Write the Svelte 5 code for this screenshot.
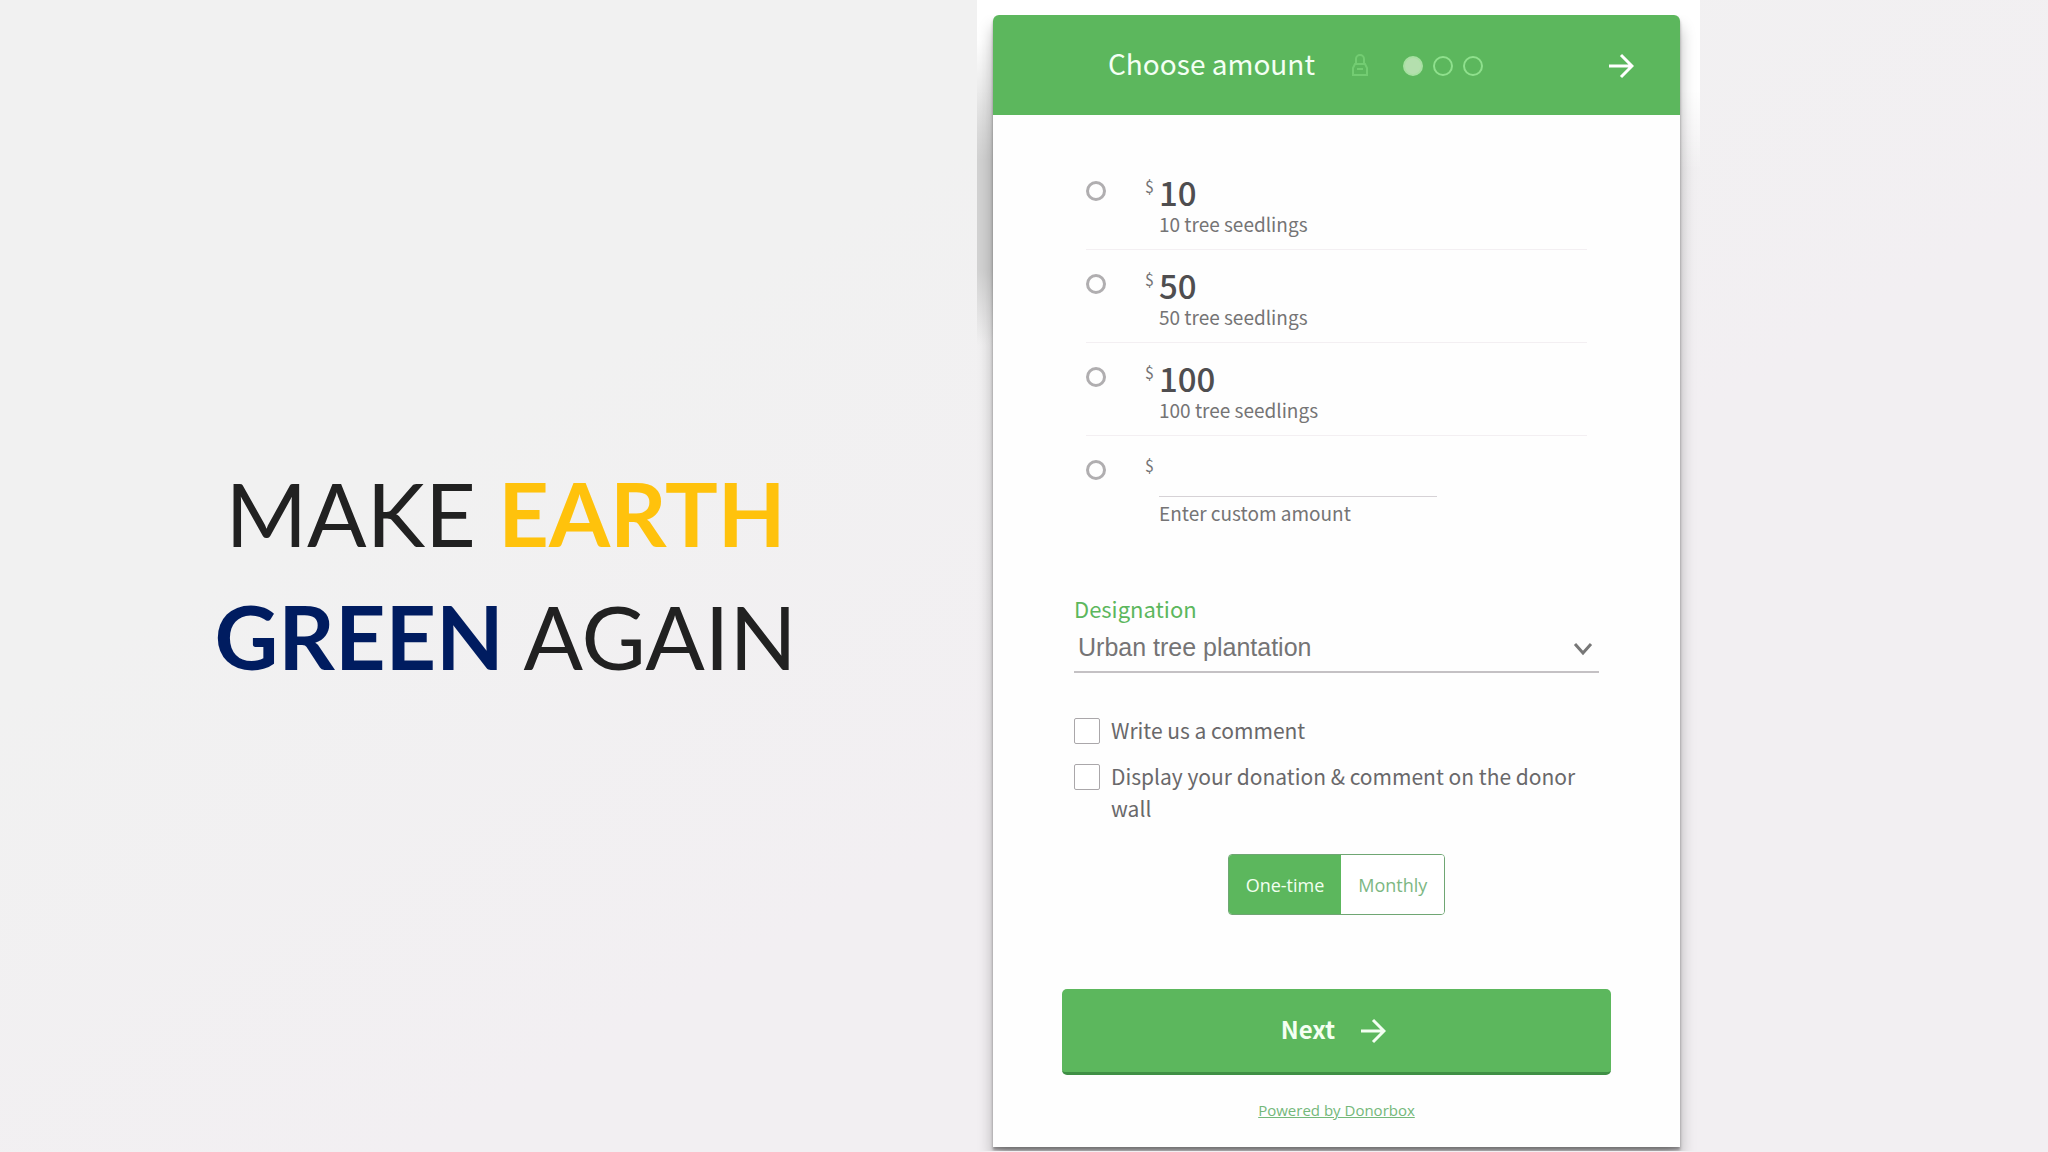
<script>
  const amounts = [10, 50, 100];
  let amount = $state('');
  let frequency = $state('One-time');
  let designation = $state('Urban tree plantation');
</script>

{#snippet arrow()}
  <svg class="arrow" viewBox="0 0 26 26" aria-hidden="true">
    <path d="M1 13H24M13 2L24 13L13 24" />
  </svg>
{/snippet}

<main>
  <section class="pitch">
    <h1>MAKE <b class="earth">EARTH</b><br /><b class="green">GREEN</b> AGAIN</h1>
  </section>

  <section class="stage">
    <form class="card" onsubmit={(e) => e.preventDefault()}>
      <header>
        <h2>Choose amount</h2>
        <svg class="lock" viewBox="0 0 20 24" aria-hidden="true">
          <path d="M6 11V6a4 4 0 0 1 8 0v5M5 11h10l2 4v7H3v-7zM7 16h6" />
        </svg>
        <ol class="steps" aria-label="Steps">
          <li class="current"></li>
          <li></li>
          <li></li>
        </ol>
        <button class="forward" type="button" aria-label="Next step">{@render arrow()}</button>
      </header>

      <div class="body">
        <div class="amounts">
          {#each amounts as value}
            <label class="option">
              <input type="radio" name="amount" value={String(value)} bind:group={amount} />
              <span class="currency">$</span>
              <span class="detail">
                <span class="value">{value}</span>
                <span class="note">{value} tree seedlings</span>
              </span>
            </label>
          {/each}
          <div class="option custom">
            <input type="radio" name="amount" value="custom" bind:group={amount} aria-label="Custom amount" />
            <span class="currency">$</span>
            <span class="detail">
              <input class="entry" id="custom-amount" type="text" inputmode="decimal" />
              <label class="note" for="custom-amount">Enter custom amount</label>
            </span>
          </div>
        </div>

        <div class="designation">
          <label for="designation">Designation</label>
          <div class="picker">
            <select id="designation" bind:value={designation}>
              <option>Urban tree plantation</option>
            </select>
            <svg class="chevron" viewBox="0 0 20 14" aria-hidden="true"><path d="M2 2L10 11L18 2" /></svg>
          </div>
        </div>

        <div class="checks">
          <label><input type="checkbox" /><span>Write us a comment</span></label>
          <label><input type="checkbox" /><span>Display your donation &amp; comment on the donor wall</span></label>
        </div>

        <div class="toggle">
          {#each ['One-time', 'Monthly'] as name}
            <button
              type="button"
              class:active={frequency === name}
              aria-pressed={frequency === name}
              onclick={() => (frequency = name)}>{name}</button>
          {/each}
        </div>

        <button class="next" type="submit"><span>Next</span> {@render arrow()}</button>
        <a class="powered" href="#donorbox">Powered by Donorbox</a>
      </div>
    </form>
  </section>
</main>

<style>
  :global(body) {
    margin: 0;
  }

  main {
    --green: #5cb75d;
    --ui: 'Noto Sans CJK SC', 'Noto Sans', sans-serif;
    display: grid;
    grid-template-columns: 977fr 723fr 348fr;
    min-height: 100vh;
    background: linear-gradient(150deg, #f1f1f1 30%, #f2eff2 60%);
    font-family: var(--ui);
    overflow: hidden;
  }

  h1,
  h2,
  ol {
    margin: 0;
    padding: 0;
    font-weight: 400;
  }

  button,
  select,
  input {
    margin: 0;
    font: inherit;
    border: 0;
    box-sizing: border-box;
  }

  button {
    cursor: pointer;
  }

  .pitch {
    display: grid;
    place-items: center;
    padding: 0 0 2px 34px;
  }

  h1 {
    font: 400 88px/123px Lato, sans-serif;
    color: #212121;
    text-align: center;
    white-space: nowrap;
  }

  .earth {
    color: #ffc20c;
  }

  .green {
    color: #001c60;
  }

  .stage {
    padding: 15px 20px 4px 16px;
    background:
      linear-gradient(transparent 40px, #d2d2d2 160px, #d2d2d2 270px, transparent 345px) 0 0 / 16px 100% no-repeat,
      linear-gradient(#fff, #fff 90px, transparent 170px);
  }

  .card {
    background: #fefefe;
    border-radius: 6px 6px 0 0;
    box-shadow: 0 12px 16px rgba(0, 0, 0, 0.28), 0 3px 3px rgba(0, 0, 0, 0.35);
    clip-path: inset(0 -20px -4px -16px);
  }

  header {
    display: flex;
    align-items: center;
    height: 100px;
    padding: 0 46px 0 115px;
    background: var(--green);
    color: #f4fff4;
    border-radius: 6px 6px 0 0;
    box-sizing: border-box;
  }

  h2 {
    padding-bottom: 4px;
    font-size: 28px;
    line-height: 40px;
  }

  .lock {
    width: 20px;
    height: 24px;
    margin-left: 35px;
    fill: none;
    stroke: #73cc72;
    stroke-width: 2;
  }

  .steps {
    display: flex;
    align-items: center;
    gap: 10px;
    margin-left: 33px;
    padding-top: 2px;
    list-style: none;
  }

  .steps li {
    width: 20px;
    height: 20px;
    border: 2px solid #8fe08d;
    border-radius: 50%;
    box-sizing: border-box;
  }

  .steps .current {
    background: #b4dfae;
    border-color: #a8e0a2;
  }

  .forward {
    margin-left: auto;
    padding: 2px 0 0;
    background: none;
    color: #fff;
    line-height: 0;
  }

  .arrow {
    width: 26px;
    height: 26px;
    fill: none;
    stroke: currentColor;
    stroke-width: 3;
  }

  .body {
    display: flex;
    flex-direction: column;
    padding: 42px 69px 25px;
  }

  .amounts {
    margin: 0 24px;
  }

  .option {
    display: flex;
    align-items: flex-start;
    height: 93px;
    padding-top: 16px;
    border-bottom: 1px solid #f3eff2;
    box-sizing: border-box;
    color: #757475;
  }

  input[type='radio'] {
    appearance: none;
    width: 20px;
    height: 20px;
    margin: 8px 39px 0 0;
    border: 3px solid #b0aeb0;
    border-radius: 50%;
  }

  .currency {
    width: 14px;
    font-size: 16px;
    line-height: 26px;
  }

  .detail {
    display: flex;
    flex-direction: column;
  }

  .value {
    font-size: 33px;
    font-weight: 500;
    line-height: 38px;
    color: #4f4e50;
  }

  .note {
    font-size: 19px;
    line-height: 26px;
  }

  .custom {
    height: 106px;
    border: 0;
  }

  .entry {
    width: 278px;
    height: 45px;
    border-bottom: 1px solid #d6d2d6;
    background: none;
    margin-bottom: 3px;
    outline: 0;
  }

  .designation {
    margin: 51px 12px 0;
    color: var(--green);
    font-size: 22px;
    line-height: 30px;
  }

  .designation label {
    display: block;
  }

  .picker {
    display: grid;
    align-items: center;
    border-bottom: 2px solid #c4c1c4;
  }

  .picker > * {
    grid-area: 1 / 1;
  }

  select {
    appearance: none;
    width: 100%;
    height: 48px;
    padding: 0 4px;
    background: none;
    font: 25px/30px 'Liberation Sans', sans-serif;
    color: #757475;
  }

  .chevron {
    justify-self: end;
    width: 20px;
    height: 14px;
    margin: 4px 6px 0 0;
    fill: none;
    stroke: #777;
    stroke-width: 3;
    pointer-events: none;
  }

  .checks {
    display: grid;
    gap: 14px;
    margin: 41px 12px 0;
    font-size: 21px;
    line-height: 32px;
    color: #69686a;
  }

  .checks label {
    display: flex;
    gap: 11px;
  }

  input[type='checkbox'] {
    appearance: none;
    flex: none;
    width: 26px;
    height: 26px;
    margin-top: 4px;
    border: 1px solid #aaa7aa;
    border-radius: 2px;
    background: #fff;
  }

  .toggle {
    display: flex;
    align-self: center;
    margin-top: 30px;
    border: 1px solid #6fa673;
    border-radius: 4px;
    overflow: hidden;
  }

  .toggle button {
    height: 59px;
    padding: 0 17px;
    background: #fff;
    color: #7cb783;
    font: 18px/24px 'Open Sans', sans-serif;
  }

  .toggle .active {
    background: var(--green);
    color: #f2fff0;
  }

  .next {
    display: flex;
    align-items: center;
    justify-content: center;
    gap: 25px;
    height: 86px;
    margin-top: 74px;
    padding-right: 12px;
    border-bottom: 3px solid #3f8f45;
    border-radius: 5px;
    background: var(--green);
    color: #f4fff2;
    font-size: 24px;
    font-weight: 700;
  }

  .next span {
    padding-bottom: 4px;
  }

  .powered {
    align-self: center;
    margin-top: 23px;
    font: 15px/24px 'Open Sans', sans-serif;
    color: #74b87a;
  }
</style>
